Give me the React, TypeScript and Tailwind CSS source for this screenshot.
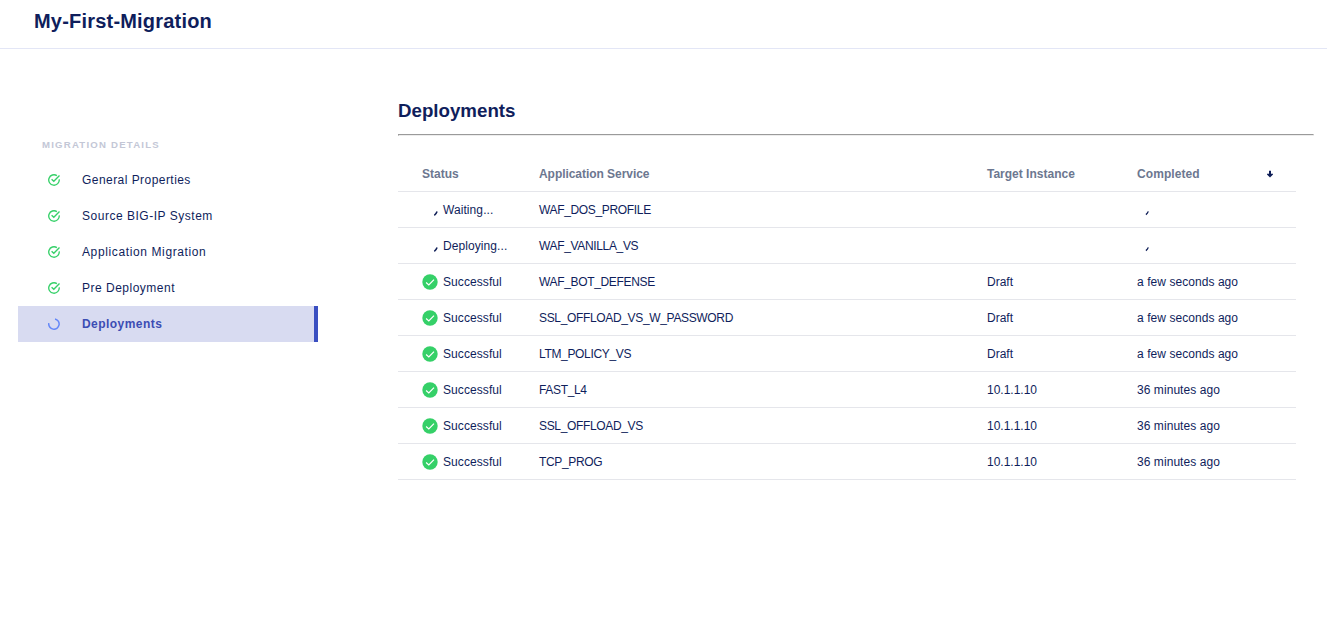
type IconProps = { className?: string };

function CheckCircle({ className = '' }: IconProps) {
  return (
    <svg className={className} width="12" height="12" viewBox="0 0 12 12" fill="none" stroke="#35d068" strokeWidth="1.35">
      <path d="M11.2 5.3A5.25 5.25 0 1 1 8.9 1.6" />
      <path d="M3.6 5.2L5.8 7.3L11.5 1.6" />
    </svg>
  );
}

function Ring({ className = '' }: IconProps) {
  return (
    <svg className={className} width="12" height="12" viewBox="0 0 12 12" fill="none" stroke="#6487f8" strokeWidth="1.5">
      <path d="M7 .9A5.2 5.2 0 1 1 .8 5.2" />
    </svg>
  );
}

function SuccessIcon() {
  return (
    <svg width="16" height="16" viewBox="0 0 16 16" fill="none" className="shrink-0">
      <circle cx="8" cy="8" r="7.7" fill="#35d068" />
      <path d="M4.1 8.5L6.8 11L12 5.6" stroke="white" strokeWidth="1.2" />
    </svg>
  );
}

function PendingIcon() {
  return (
    <svg width="16" height="16" viewBox="0 0 16 16" fill="none" className="shrink-0">
      <path d="M12.3 13.3Q14.3 11.9 15.1 9.6" stroke="#0f1e57" strokeWidth="1.5" />
    </svg>
  );
}

function PendingMark() {
  return (
    <svg width="12" height="16" viewBox="0 0 12 16" fill="none">
      <path d="M8.9 12.6Q10.6 11.4 11.3 9.4" stroke="#0f1e57" strokeWidth="1.3" />
    </svg>
  );
}

const steps = [
  { label: 'General Properties', tracking: 'tracking-[0.45px]' },
  { label: 'Source BIG-IP System', tracking: 'tracking-[0.52px]' },
  { label: 'Application Migration', tracking: 'tracking-[0.62px]' },
  { label: 'Pre Deployment', tracking: 'tracking-[0.5px]' },
];

const rows = [
  { status: 'Waiting...', service: 'WAF_DOS_PROFILE', target: '', completed: '' },
  { status: 'Deploying...', service: 'WAF_VANILLA_VS', target: '', completed: '' },
  { status: 'Successful', service: 'WAF_BOT_DEFENSE', target: 'Draft', completed: 'a few seconds ago' },
  { status: 'Successful', service: 'SSL_OFFLOAD_VS_W_PASSWORD', target: 'Draft', completed: 'a few seconds ago' },
  { status: 'Successful', service: 'LTM_POLICY_VS', target: 'Draft', completed: 'a few seconds ago' },
  { status: 'Successful', service: 'FAST_L4', target: '10.1.1.10', completed: '36 minutes ago' },
  { status: 'Successful', service: 'SSL_OFFLOAD_VS', target: '10.1.1.10', completed: '36 minutes ago' },
  { status: 'Successful', service: 'TCP_PROG', target: '10.1.1.10', completed: '36 minutes ago' },
];

export default function App() {
  return (
    <div className="h-[627px] w-[1327px] overflow-hidden bg-white font-['Liberation_Sans',Arial,sans-serif] text-xs text-[#0f1e5c]">
      <header className="h-[49px] border-b border-[#e3e6f6] pl-[34px] pt-1.5">
        <h1 className="text-xl leading-[30px] font-bold tracking-[0.2px]">My-First-Migration</h1>
      </header>
      <div className="flex">
        <nav className="ml-[18px] w-[300px] pt-[86px]">
          <div className="mb-2 h-[19px] pl-6 text-[9.6px] leading-[19px] font-bold tracking-[1.22px] text-[#c3c7d6]">
            MIGRATION DETAILS
          </div>
          {steps.map((step) => (
            <div key={step.label} className="flex h-9 items-center pl-[30px]">
              <CheckCircle />
              <span className={`ml-[22px] ${step.tracking}`}>{step.label}</span>
            </div>
          ))}
          <div className="flex h-9 items-center border-r-4 border-[#3a4fc1] bg-[#d8dbf1] pl-[30px] font-bold tracking-[0.45px] text-[#3c4db4]">
            <Ring />
            <span className="ml-[22px]">Deployments</span>
          </div>
        </nav>
        <main className="ml-20 w-[916px] pt-[47px]">
          <h2 className="h-[38px] text-[18.72px] leading-[30px] font-bold">Deployments</h2>
          <div className="h-0.5 border border-t-[#9a9a9a] border-r-[#ededed] border-b-[#ededed] border-l-[#9a9a9a]" />
          <div className="mt-5 w-[898px]">
            <div className="flex h-9 items-center border-b border-[#e5e6eb] pl-6 font-bold text-[#6c7790]">
              <div className="w-[117px]">Status</div>
              <div className="w-[448px] tracking-[-0.05px]">Application Service</div>
              <div className="w-[150px]">Target Instance</div>
              <div className="w-[130px] tracking-[0.08px]">Completed</div>
              <svg width="6" height="8" viewBox="0 0 6 8" fill="#0f1e57">
                <path d="M2 .8h2v2.9h2v.8L3 7.6L0 4.5v-.8h2z" />
              </svg>
            </div>
            {rows.map((row) => (
              <div key={row.service} className="flex h-9 items-center border-b border-[#e5e6eb] pl-6">
                <div className="flex w-[117px] items-center gap-[5px] tracking-[0.08px]">
                  {row.target ? <SuccessIcon /> : <PendingIcon />}
                  <span>{row.status}</span>
                </div>
                <div className="w-[448px] tracking-[-0.34px]">{row.service}</div>
                <div className="w-[150px]">{row.target}</div>
                <div className="tracking-[0.06px]">{row.completed || <PendingMark />}</div>
              </div>
            ))}
          </div>
        </main>
      </div>
    </div>
  );
}
